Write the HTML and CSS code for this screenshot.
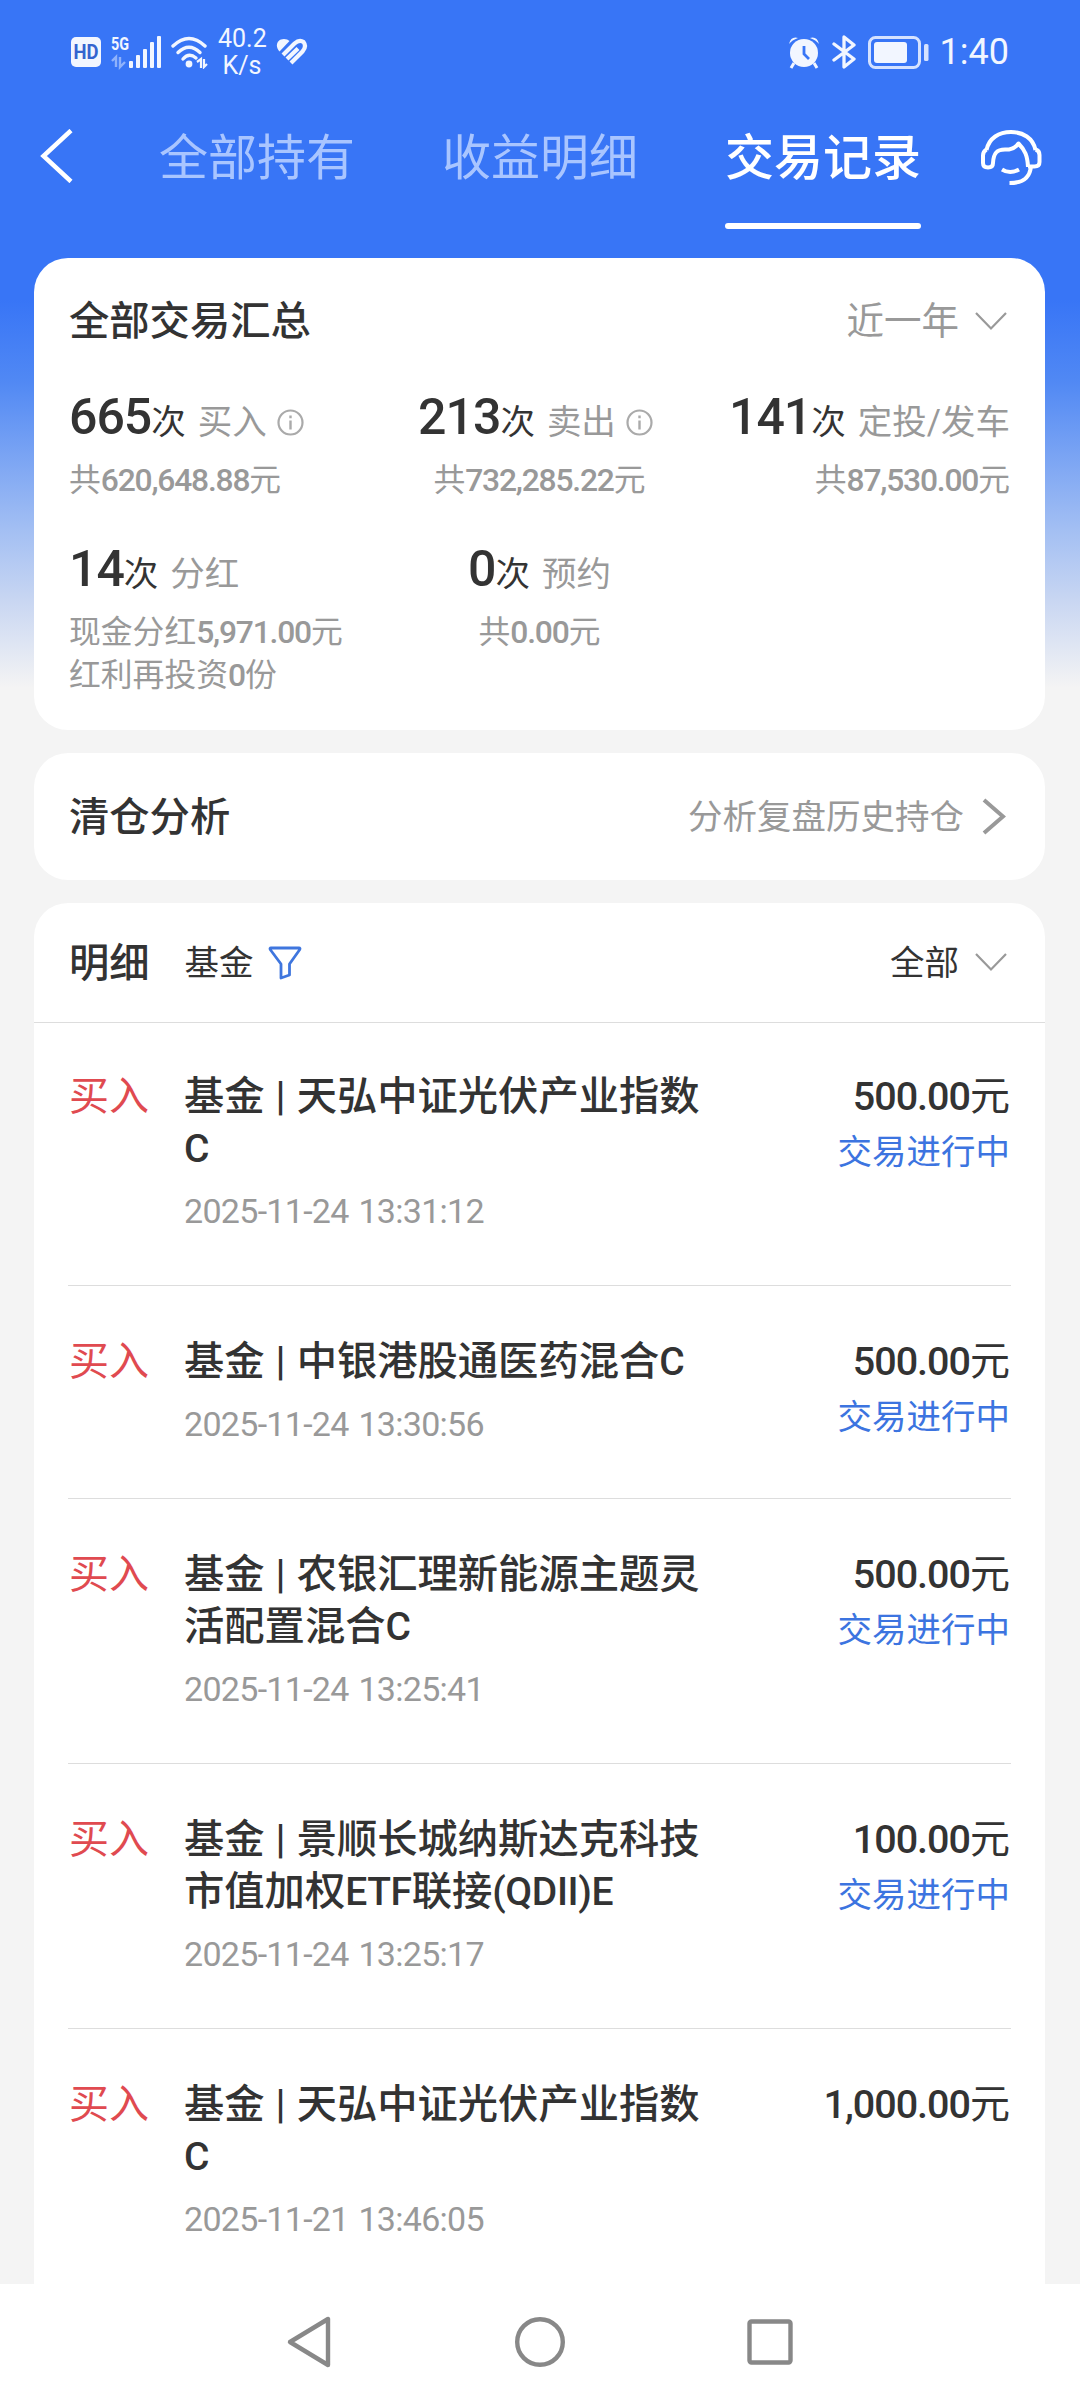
FILE: index.html
```
<!DOCTYPE html>
<html lang="zh-CN">
  <head>
    <meta charset="utf-8" />
    <title>交易记录</title>
    <link rel="stylesheet" href="styles.css">
  </head>

  <body>
    <div class="screen">
      <div class="status-bar">
        <svg class="hd" width="30" height="30" viewBox="0 0 30 30">
          <rect width="30" height="30" rx="5" fill="#f2f6ff"/>
          <text x="15" y="21.5" text-anchor="middle" textLength="25" lengthAdjust="spacingAndGlyphs" class="hd-text">HD</text>
        </svg>
        <svg class="signal" width="51" height="40" viewBox="0 -3 51 40">
          <text x="0" y="15" textLength="18" lengthAdjust="spacingAndGlyphs" class="net-text">5G</text>
          <path d="M1 26l4-4v10M9 22v10l5-5" fill="none" stroke="#8fb2fb" stroke-width="2.4"/>
          <g fill="#f2f6ff">
            <rect x="18" y="26" width="4" height="7" rx="1"/>
            <rect x="25" y="20" width="4" height="13" rx="1"/>
            <rect x="32" y="14" width="4" height="19" rx="1"/>
            <rect x="39" y="7" width="4" height="26" rx="1"/>
            <rect x="46" y="1" width="4" height="32" rx="1"/>
          </g>
        </svg>
        <svg class="wifi" width="38" height="34" viewBox="0 0 38 34">
          <g fill="none" stroke="#f2f6ff" stroke-width="3.4" stroke-linecap="round">
            <path d="M2 11Q18 -4 34 11"/>
            <path d="M7 17.500Q18 7 29 17.500"/>
            <path d="M12 24Q18 17 25 23"/>
          </g>
          <circle cx="18" cy="29" r="3.400" fill="#f2f6ff"/>
          <path d="M26 27l4-3v9M33 24v8l3-3" fill="none" stroke="#f2f6ff" stroke-width="2.200"/>
        </svg>
        <div class="speed">40.2<br>K/s</div>
        <svg class="health" width="32" height="28" viewBox="0 0 32 28">
          <path d="M3.500 13.500C-1.500 8 1 1 8 1q3.500 0 5.500 2z" fill="#f2f6ff"/>
          <path d="M7 17L18.500 5.500q5-4.500 9-1.500 3.500 4.500-1 9.500L15 25M11 21L22 10.500" fill="none" stroke="#f2f6ff" stroke-width="4.200"/>
        </svg>

        <div class="status-right">
          <svg width="32" height="33" viewBox="0 0 32 33">
            <g fill="#f2f6ff">
              <circle cx="16" cy="17" r="14"/>
              <path d="M1 8Q3 0 10 2Q4 4 1 8zM31 8Q29 0 22 2Q28 4 31 8z"/>
            </g>
            <path d="M6 27l-3 5M26 27l3 5" stroke="#f2f6ff" stroke-width="3"/>
            <path d="M16 10v8l5 5" fill="none" stroke="#3875f6" stroke-width="2.800"/>
          </svg>
          <svg class="bt" width="24" height="34" viewBox="0 0 24 34">
            <path d="M2 9l20 15-10 8V2l10 8L2 25" fill="none" stroke="#f2f6ff" stroke-width="3.300" stroke-linejoin="round" stroke-linecap="round"/>
          </svg>
          <svg class="battery" width="61" height="33" viewBox="0 0 61 33">
            <rect x="1.500" y="1.500" width="50" height="30" rx="6" fill="none" stroke="#d5e2ff" stroke-width="3"/>
            <rect x="6" y="6" width="33" height="21" rx="3" fill="#f2f6ff"/>
            <rect x="56" y="8" width="4.500" height="17" rx="1.500" fill="#d5e2ff"/>
          </svg>
          <span class="clock">1:40</span>
        </div>
      </div>

      <div class="nav">
        <svg class="back" width="34" height="54" viewBox="0 0 34 54">
          <path d="M31 1.500L3.500 27L31 52.500" fill="none" stroke="#fff" stroke-width="4.500"/>
        </svg>
        <div class="tabs">
          <div class="tab">全部持有</div>
          <div class="tab">收益明细</div>
          <div class="tab active">交易记录</div>
        </div>
        <svg class="service" width="62" height="58" viewBox="0 0 62 58">
          <g fill="none" stroke="#fff" stroke-width="4" stroke-linejoin="round">
            <path d="M6.500 21C9 9 19 3 31 3s22 6 24.500 18"/>
            <path d="M6.500 20.500q-3.500 2-3.500 6V34q0 4.500 5 4.500t5-4.500c.5-10 4-13.500 12-13.500h4q6-1 9.500-6C45 21 47.500 27 48 38"/>
            <path d="M55.500 20.500q4 1 4 5.500v7q0 4.500-5 4.500H48"/>
            <path d="M51 37C50 49 43 54 29.500 54"/>
            <path d="M22 40.500q8 5 17 0"/>
          </g>
        </svg>
      </div>

      <div class="content">
        <div class="card summary">
          <div class="summary-head">
            <span class="title">全部交易汇总</span>
            <span class="period">近一年
              <svg class="down" width="32" height="19" viewBox="0 0 32 19"><path d="M1 1l15 15.500L31 1" fill="none" stroke="#999" stroke-width="2.200"/></svg>
            </span>
          </div>
          <div class="stats">
            <div class="stat">
              <div class="count"><b>665</b>次<span class="kind">买入</span><svg class="info" width="27" height="27" viewBox="0 0 27 27"><circle cx="13.500" cy="13.500" r="12" fill="none" stroke="#aaa" stroke-width="2.200"/><path d="M13.500 11.500v9M13.500 6.500v2.800" stroke="#aaa" stroke-width="2.400"/></svg></div>
              <div class="sum">共<i>620,648.88</i>元</div>
            </div>
            <div class="stat center">
              <div class="count nudge"><b>213</b>次<span class="kind">卖出</span><svg class="info" width="27" height="27" viewBox="0 0 27 27"><circle cx="13.500" cy="13.500" r="12" fill="none" stroke="#aaa" stroke-width="2.200"/><path d="M13.500 11.500v9M13.500 6.500v2.800" stroke="#aaa" stroke-width="2.400"/></svg></div>
              <div class="sum">共<i>732,285.22</i>元</div>
            </div>
            <div class="stat right">
              <div class="count"><b>141</b>次<span class="kind">定投/发车</span></div>
              <div class="sum">共<i>87,530.00</i>元</div>
            </div>
            <div class="stat">
              <div class="count"><b>14</b>次<span class="kind">分红</span></div>
              <div class="sum">现金分红<i>5,971.00</i>元<br>红利再投资<i>0</i>份</div>
            </div>
            <div class="stat center">
              <div class="count"><b>0</b>次<span class="kind">预约</span></div>
              <div class="sum">共<i>0.00</i>元</div>
            </div>
          </div>
        </div>

        <div class="card analysis">
          <span class="title">清仓分析</span>
          <span class="link"><span class="label">分析复盘历史持仓</span>
            <svg class="go" width="24" height="37" viewBox="0 0 24 37"><path d="M2 2l19 16.500L2 35" fill="none" stroke="#999" stroke-width="4"/></svg>
          </span>
        </div>

        <div class="card detail">
          <div class="detail-head">
            <span class="title">明细</span>
            <span class="fund label">基金</span>
            <svg class="filter" width="34" height="34" viewBox="0 0 34 34"><path d="M3 2h28q1.500 0 .8 1.500L21.500 18v11l-8.500 3V18L2.200 3.500Q1.500 2 3 2z" fill="none" stroke="#3f76de" stroke-width="2.800" stroke-linejoin="round"/></svg>
            <span class="all"><span class="label">全部</span>
              <svg class="down" width="32" height="19" viewBox="0 0 32 19"><path d="M1 1l15 15.500L31 1" fill="none" stroke="#999" stroke-width="2.200"/></svg>
            </span>
          </div>

          <div class="item">
            <div class="type">买入</div>
            <div class="info-col">
              <div class="name">基金 | 天弘中证光伏产业指数<i>C</i></div>
              <div class="time">2025-11-24 13:31:12</div>
            </div>
            <div class="money">
              <div class="amount"><i>500.00</i>元</div>
              <div class="state">交易进行中</div>
            </div>
          </div>
          <div class="item">
            <div class="type">买入</div>
            <div class="info-col">
              <div class="name">基金 | 中银港股通医药混合<i>C</i></div>
              <div class="time">2025-11-24 13:30:56</div>
            </div>
            <div class="money">
              <div class="amount"><i>500.00</i>元</div>
              <div class="state">交易进行中</div>
            </div>
          </div>
          <div class="item">
            <div class="type">买入</div>
            <div class="info-col">
              <div class="name">基金 | 农银汇理新能源主题灵活配置混合<i>C</i></div>
              <div class="time">2025-11-24 13:25:41</div>
            </div>
            <div class="money">
              <div class="amount"><i>500.00</i>元</div>
              <div class="state">交易进行中</div>
            </div>
          </div>
          <div class="item">
            <div class="type">买入</div>
            <div class="info-col">
              <div class="name">基金 | 景顺长城纳斯达克科技市值加权<i>ETF</i>联接<i>(QDII)E</i></div>
              <div class="time">2025-11-24 13:25:17</div>
            </div>
            <div class="money">
              <div class="amount"><i>100.00</i>元</div>
              <div class="state">交易进行中</div>
            </div>
          </div>
          <div class="item">
            <div class="type">买入</div>
            <div class="info-col">
              <div class="name">基金 | 天弘中证光伏产业指数<i>C</i></div>
              <div class="time">2025-11-21 13:46:05</div>
            </div>
            <div class="money">
              <div class="amount"><i>1,000.00</i>元</div>
            </div>
          </div>
        </div>
      </div>

      <div class="sysbar">
        <svg width="46" height="54" viewBox="0 0 46 54"><path d="M42 4v46L4 27z" fill="none" stroke="#888" stroke-width="4.400" stroke-linejoin="round"/></svg>
        <svg width="52" height="52" viewBox="0 0 52 52"><circle cx="26" cy="26" r="22.800" fill="none" stroke="#888" stroke-width="4.400"/></svg>
        <svg width="46" height="46" viewBox="0 0 46 46"><rect x="2.500" y="2.500" width="41" height="41" rx="2" fill="none" stroke="#888" stroke-width="4.400"/></svg>
      </div>
    </div>
  </body>
</html>
```
FILE: styles.css
```
* {
  box-sizing: border-box;
}
body {
  margin: 0;
  background: #f4f4f4;
  font-family: Roboto, "Noto Sans CJK SC", sans-serif;
  color: #333;
}
svg {
  display: block;
  flex: none;
}
i, b {
  font-style: normal;
}
.screen {
  width: 1080px;
  height: 2400px;
  overflow: hidden;
  display: flex;
  flex-direction: column;
  background: linear-gradient(#3875f6 0, #3875f6 300px, #5088f4 380px, #a3bff3 530px, #c8d6f2 600px, #f4f4f4 688px);
}

/* status bar */
.status-bar {
  height: 104px;
  flex: none;
  display: flex;
  align-items: center;
  padding: 0 71px 0 71px;
  color: #f2f6ff;
}
.hd-text {
  font: 700 20px Roboto, sans-serif;
  fill: #3464cf;
}
.net-text {
  font: 700 19px Roboto, sans-serif;
  fill: #f2f6ff;
}
.signal {
  margin-left: 10px;
}
.wifi {
  margin-left: 9px;
}
.speed {
  width: 48px;
  margin-left: 9px;
  font-size: 25px;
  line-height: 27px;
  text-align: center;
  white-space: nowrap;
}
.health {
  margin-left: 10px;
}
.status-right {
  margin-left: auto;
  display: flex;
  align-items: center;
}
.bt {
  margin-left: 12px;
}
.battery {
  margin-left: 12px;
}
.clock {
  margin-left: 11px;
  font-size: 36px;
}

/* tabs */
.nav {
  height: 154px;
  flex: none;
  display: flex;
  align-items: flex-start;
  padding: 25px 38px 0 40px;
}
.tabs {
  display: flex;
  gap: 87px;
  margin-left: 85px;
}
.tab {
  font-size: 49px;
  line-height: 59px;
  height: 100px;
  color: #a9c5ff;
}
.active {
  color: #fff;
  font-weight: 500;
}
.active::after {
  content: "";
  display: block;
  height: 6px;
  margin-top: 35px;
  border-radius: 3px;
  background: #fff;
}
.service {
  margin-left: auto;
}

/* cards */
.content {
  flex: 1;
  min-height: 0;
  overflow: hidden;
  padding: 0 35px 0 34px;
}
.card {
  background: #fff;
  border-radius: 34px;
  margin-bottom: 23px;
}
.title {
  font-size: 40.3px;
  font-weight: 500;
  line-height: 60px;
  padding-top: 2px;
}
.summary {
  height: 472px;
  padding: 32px 35px 0;
}
.summary-head {
  display: flex;
  justify-content: space-between;
  align-items: center;
}
.period, .link, .all {
  display: flex;
  align-items: center;
  color: #999;
}
.period {
  font-size: 37.5px;
  line-height: 60px;
}
.down {
  margin-left: 16px;
  margin-right: 3px;
}
.stats {
  display: grid;
  grid-template-columns: 1fr 1fr 1fr;
  padding-top: 32px;
}
.stat {
  height: 152px;
  white-space: nowrap;
}
.count {
  display: flex;
  align-items: baseline;
  font-size: 34.5px;
  line-height: 66px;
}
.count b {
  font-size: 50px;
  font-weight: 500;
  letter-spacing: -1px;
}
.kind {
  color: #999;
  margin-left: 12px;
}
.info {
  align-self: center;
  margin: 6px 0 0 10px;
}
.sum {
  font-size: 31.8px;
  line-height: 43px;
  color: #999;
  margin-top: 4px;
}
.sum i {
  font-weight: 500;
  letter-spacing: -1.2px;
}
.center {
  text-align: center;
}
.center .count {
  justify-content: center;
}
.center .nudge {
  margin-right: 8px;
}
.right {
  text-align: right;
}
.right .count {
  justify-content: flex-end;
}
.analysis {
  height: 127px;
  padding: 0 35px;
  display: flex;
  justify-content: space-between;
  align-items: center;
}
.link {
  font-size: 34.5px;
}
.label {
  padding-bottom: 5px;
}
.go {
  margin: 0 4px 0 18px;
}

/* list */
.detail {
  padding-bottom: 60px;
}
.detail-head {
  height: 120px;
  display: flex;
  align-items: center;
  padding: 0 35px;
  border-bottom: 1px solid #ddd;
}
.fund {
  font-size: 34.5px;
  margin-left: 35px;
}
.filter {
  margin-left: 14px;
}
.all {
  margin-left: auto;
  font-size: 34.5px;
  color: #333;
}
.item {
  display: flex;
  margin: 0 34px;
  padding: 50px 1px 48px;
  border-bottom: 1px solid #ddd;
  line-height: 52px;
}
.detail-head + .item {
  padding-top: 48px;
}
.type {
  width: 115px;
  font-size: 40px;
  color: #e04a50;
}
.info-col {
  width: 524px;
}
.name {
  font-size: 40.3px;
  font-weight: 500;
  word-spacing: 1px;
}
.name i {
  font-size: 39px;
  line-height: 1;
  letter-spacing: -0.4px;
}
.time {
  font-size: 34px;
  letter-spacing: -0.7px;
  word-spacing: 2px;
  color: #999;
  margin-top: 10px;
}
.money {
  margin-left: auto;
  text-align: right;
}
.amount {
  font-size: 40px;
}
.amount i {
  font-size: 39.5px;
  line-height: 1;
  font-weight: 500;
  letter-spacing: -1px;
}
.state {
  font-size: 34.5px;
  color: #3c74e0;
  margin-top: 3px;
}

/* system buttons */
.sysbar {
  height: 116px;
  flex: none;
  background: #fff;
  display: flex;
  align-items: center;
  justify-content: space-between;
  padding: 0 287px 0 286px;
}
```
